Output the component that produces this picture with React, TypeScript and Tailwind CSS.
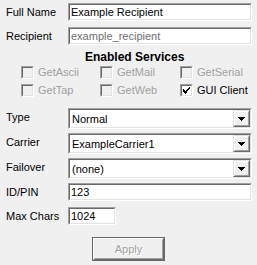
import React from "react";

function Sunken({ className = "", children }: { className?: string; children?: React.ReactNode }) {
  return (
    <div className={"border border-t-[#a0a0a0] border-l-[#a0a0a0] border-r-white border-b-white " + className}>
      <div className="w-full h-full border border-t-[#696969] border-l-[#696969] border-r-[#e3e3e3] border-b-[#e3e3e3] bg-white flex items-center">
        {children}
      </div>
    </div>
  );
}

function Edit({ value, w, gray }: { value: string; w: string; gray?: boolean }) {
  return (
    <Sunken className={w + " h-[18px]"}>
      <span className={"pl-[1px] leading-[14px] " + (gray ? "text-[#6d6d6d]" : "text-black")}>{value}</span>
    </Sunken>
  );
}

function Combo({ value }: { value: string }) {
  return (
    <Sunken className="w-[184px] h-[21px]">
      <span className="pl-[2px] flex-1 leading-[14px]">{value}</span>
      <div className="w-[17px] h-[17px] mr-0 border border-t-[#e3e3e3] border-l-[#e3e3e3] border-r-[#696969] border-b-[#696969]">
        <div className="w-full h-full border border-t-white border-l-white border-r-[#a0a0a0] border-b-[#a0a0a0] bg-[#f0f0f0] flex items-center justify-center">
          <svg width="7" height="4" viewBox="0 0 7 4">
            <path d="M0 0h7v1H0zM1 1h5v1H1zM2 2h3v1H2zM3 3h1v1H3z" fill="#000" />
          </svg>
        </div>
      </div>
    </Sunken>
  );
}

function Check({ label, disabled, checked }: { label: string; disabled?: boolean; checked?: boolean }) {
  return (
    <div className="flex items-center h-[13px]">
      <div className="w-[13px] h-[13px] border border-t-[#a0a0a0] border-l-[#a0a0a0] border-r-white border-b-white">
        <div
          className={
            "w-full h-full border border-t-[#696969] border-l-[#696969] border-r-[#e3e3e3] border-b-[#e3e3e3] flex items-center justify-center " +
            (disabled ? "bg-[#f0f0f0]" : "bg-white")
          }
        >
          {checked && (
            <svg width="7" height="7" viewBox="0 0 7 7">
              <path d="M0 2h1v1H0zM0 3h2v1H0zM0 4h3v1H0zM1 5h3v1H1zM2 6h1v1H2zM3 4h1v1H3zM4 3h1v1H4zM5 2h1v1H5zM6 0h1v2H6zM5 1h2v1H5zM4 2h2v1H4zM3 3h2v1H3z" fill="#000" />
            </svg>
          )}
        </div>
      </div>
      <span className={"ml-[4px] leading-[13px] " + (disabled ? "text-[#a0a0a0]" : "text-black")}>{label}</span>
    </div>
  );
}

function Row({ label, children, h, labelPad }: { label: string; children: React.ReactNode; h: string; labelPad: string }) {
  return (
    <div className={"flex " + h}>
      <div className={"w-[62px] leading-[13px] " + labelPad}>{label}</div>
      {children}
    </div>
  );
}

export default function App() {
  return (
    <div
      className="w-[257px] h-[265px] bg-[#f0f0f0] text-[11px] text-black overflow-hidden flex flex-col pl-[6px] pt-[3px]"
      style={{ fontFamily: '"Liberation Sans", Arial, sans-serif' }}
    >
      <Row label="Full Name" h="h-[18px]" labelPad="pt-[3px]">
        <Edit value="Example Recipient" w="w-[184px]" />
      </Row>
      <div className="h-[6px]" />
      <Row label="Recipient" h="h-[18px]" labelPad="pt-[3px]">
        <Edit value="example_recipient" w="w-[184px]" gray />
      </Row>
      <div className="flex h-[22px] items-center pl-[79px]">
        <div className="font-bold text-[12px] leading-[13px] pt-[2px]">Enabled Services</div>
      </div>
      <div className="grid grid-cols-[79px_80px_70px] pl-[15px] gap-y-[5px] mt-[-1px]">
        <Check label="GetAscii" disabled />
        <Check label="GetMail" disabled />
        <Check label="GetSerial" disabled />
        <Check label="GetTap" disabled />
        <Check label="GetWeb" disabled />
        <Check label="GUI Client" checked />
      </div>
      <div className="h-[11px]" />
      <Row label="Type" h="h-[21px]" labelPad="pt-[3px]">
        <Combo value="Normal" />
      </Row>
      <div className="h-[4px]" />
      <Row label="Carrier" h="h-[21px]" labelPad="pt-[3px]">
        <Combo value="ExampleCarrier1" />
      </Row>
      <div className="h-[4px]" />
      <Row label="Failover" h="h-[21px]" labelPad="pt-[3px]">
        <Combo value="(none)" />
      </Row>
      <div className="h-[4px]" />
      <Row label="ID/PIN" h="h-[18px]" labelPad="pt-[3px]">
        <Edit value="123" w="w-[184px]" />
      </Row>
      <div className="h-[6px]" />
      <Row label="Max Chars" h="h-[18px]" labelPad="pt-[3px]">
        <Edit value="1024" w="w-[48px]" />
      </Row>
      <div className="flex pl-[86px] mt-[12px]">
        <div className="w-[73px] h-[24px] border border-[#696969]">
          <div className="w-full h-full border border-t-white border-l-white border-r-[#696969] border-b-[#696969]">
            <div className="w-full h-full border border-t-[#f0f0f0] border-l-[#f0f0f0] border-r-[#a0a0a0] border-b-[#a0a0a0] flex items-center justify-center text-[#a0a0a0] [text-shadow:1px_1px_0_#fff]">
              Apply
            </div>
          </div>
        </div>
      </div>
    </div>
  );
}
